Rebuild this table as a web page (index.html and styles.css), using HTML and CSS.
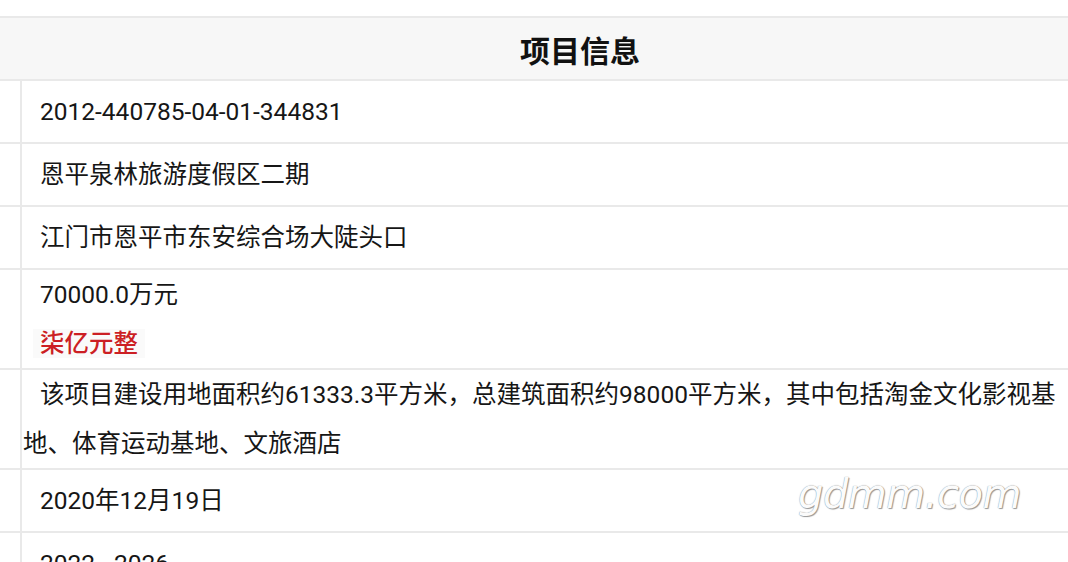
FILE: index.html
```html
<!DOCTYPE html>
<html lang="zh-CN">
<head>
    <meta charset="UTF-8">
    <meta name="viewport" content="width=device-width, initial-scale=1.0">
    <title>项目信息</title>
    <link rel="stylesheet" href="styles.css">
</head>
<body>

<table class="info-table">
    <colgroup>
        <col class="col-label">
        <col class="col-value">
    </colgroup>
    <tr>
        <th colspan="2" class="info-title">项目信息</th>
    </tr>
    <tr>
        <td class="label"></td>
        <td class="value">2012-440785-04-01-344831</td>
    </tr>
    <tr>
        <td class="label"></td>
        <td class="value">恩平泉林旅游度假区二期</td>
    </tr>
    <tr>
        <td class="label"></td>
        <td class="value">江门市恩平市东安综合场大陡头口</td>
    </tr>
    <tr>
        <td class="label"></td>
        <td class="value">
            <div>70000.0万元</div>
            <div class="amount-cn"><span>柒亿元整</span></div>
        </td>
    </tr>
    <tr>
        <td class="label"></td>
        <td class="value">该项目建设用地面积约61333.3平方米，总建筑面积约98000平方米，其中包括淘金文化影视基地、体育运动基地、文旅酒店</td>
    </tr>
    <tr>
        <td class="label"></td>
        <td class="value">2020年12月19日</td>
    </tr>
    <tr>
        <td class="label"></td>
        <td class="value">2022 - 2026</td>
    </tr>
</table>

<!-- site watermark -->
<div class="watermark">gdmm.com</div>

</body>
</html>
```

FILE: styles.css
```css
body {
  margin: 0;
  background-color: #fff;
  font-family: "Roboto", "Noto Sans CJK SC", sans-serif;
  color: #161616;
  overflow: hidden;
}

.info-table {
  width: 100%;
  margin-top: 16px;
  border-collapse: collapse;
  table-layout: fixed;
}

.col-label {
  width: 21px;
}

.info-table th,
.info-table td {
  border: 2px solid #e9e9e9;
  padding: 0;
}

.info-title {
  height: 61px;
  background-color: #f7f7f7;
  font-size: 30px;
  font-weight: bold;
  color: #111;
  text-align: center;
  padding-left: 92px !important;
  border-left: none !important;
  border-right: none !important;
}

.label {
  border-left: none !important;
}

.value {
  height: 61px;
  font-size: 24.5px;
  line-height: 49px;
  text-indent: 17px;
  padding-left: 1px !important;
  border-right: none !important;
  vertical-align: middle;
}

.amount-cn {
  text-indent: 10px;
}

.amount-cn span {
  padding: 0 7px;
  background-color: #fafafa;
  color: #cc1f24;
  font-weight: 500;
}

.watermark {
  position: absolute;
  left: 798px;
  top: 471px;
  font-family: "DejaVu Sans", sans-serif;
  font-style: italic;
  font-weight: 200;
  font-size: 40px;
  letter-spacing: -0.5px;
  color: #fbfbfb;
  text-shadow: 0 0 1px #7a7a7a, 1px 1px 1px #9a9a9a;
}
```
